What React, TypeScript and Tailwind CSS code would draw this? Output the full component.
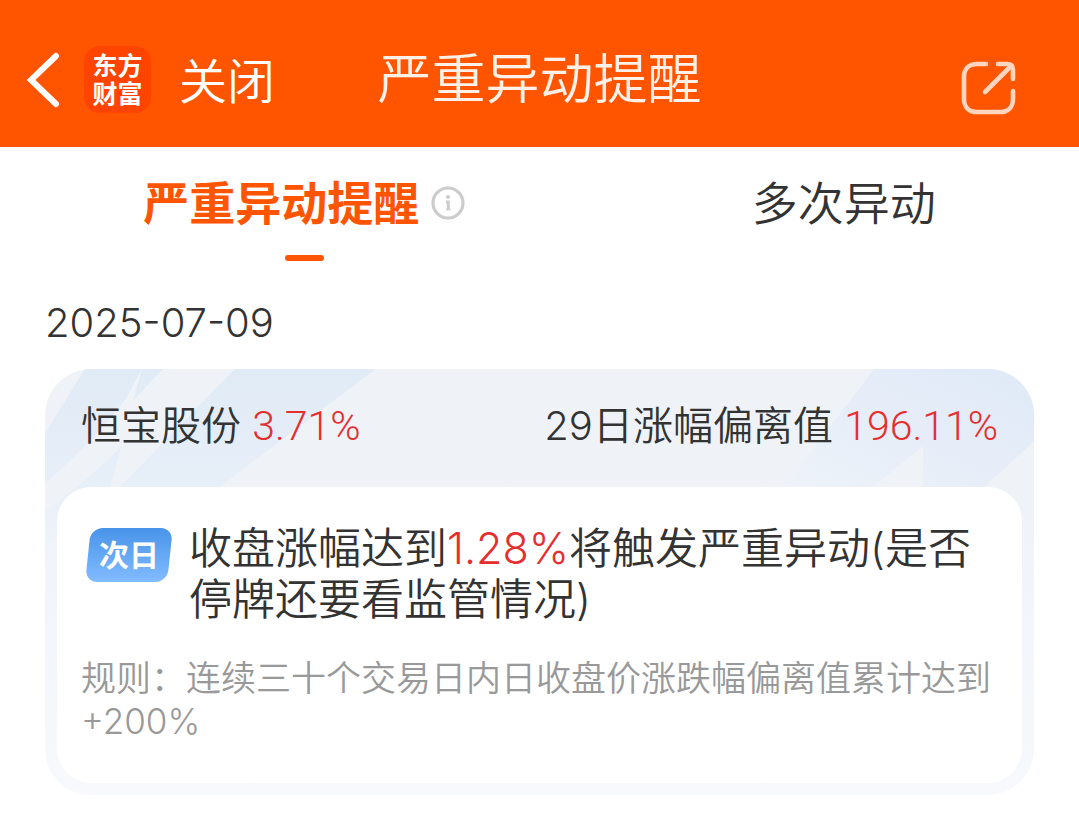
import { useState } from "react";

const tabs = [
  { key: "serious", label: "严重异动提醒", hasInfo: true },
  { key: "multiple", label: "多次异动", hasInfo: false },
];

const alerts = [
  {
    name: "恒宝股份",
    change: "3.71%",
    deviationLabel: "29日涨幅偏离值",
    deviation: "196.11%",
    badge: "次日",
    before: "收盘涨幅达到",
    trigger: "1.28%",
    after: "将触发严重异动(是否停牌还要看监管情况)",
    rule: "规则：连续三十个交易日内日收盘价涨跌幅偏离值累计达到+200%",
  },
];

function BackIcon() {
  return (
    <svg width="36" height="56" viewBox="0 0 36 56" fill="none" stroke="#fff" strokeWidth="6">
      <path d="M32 4 L7 28 L32 52" strokeLinecap="round" strokeLinejoin="miter" />
    </svg>
  );
}

function ShareIcon() {
  return (
    <svg
      width="56"
      height="56"
      viewBox="0 0 56 56"
      fill="none"
      stroke="#ffd5c0"
      strokeWidth="4.6"
      strokeLinecap="round"
      strokeLinejoin="round"
    >
      <path d="M25 4 H16 C8 4 3 9 3 17 V39 C3 47 8 52 16 52 H39 C47 52 52 47 52 39 V31" />
      <path d="M37 4 H46 C50 4 52 6 52 10 V19" />
      <path d="M24 32 L50 6" />
    </svg>
  );
}

function InfoIcon() {
  return (
    <svg width="34" height="34" viewBox="0 0 34 34" fill="none" stroke="#cccccc">
      <circle cx="17" cy="17" r="15" strokeWidth="3.2" />
      <circle cx="17" cy="11" r="2" fill="#cccccc" stroke="none" />
      <path d="M15 16 H17.3 V24" strokeWidth="3" />
      <path d="M15 23.5 H19.5" strokeWidth="1.6" />
    </svg>
  );
}

// Slanted light beams behind the card header
function CardBeams() {
  return (
    <svg
      className="absolute inset-x-0 top-0 w-full"
      height="180"
      viewBox="0 0 990 180"
      preserveAspectRatio="none"
      aria-hidden="true"
    >
      <defs>
        <linearGradient id="beam" gradientUnits="userSpaceOnUse" x1="0" y1="0" x2="0" y2="180">
          <stop offset="0" stopColor="#e1ebf5" />
          <stop offset="0.65" stopColor="#e7eff9" />
          <stop offset="1" stopColor="#eff4f9" />
        </linearGradient>
        <linearGradient id="beamRight" x1="0" y1="1" x2="1" y2="0">
          <stop offset="0" stopColor="#eef3f9" />
          <stop offset="0.5" stopColor="#e6edf8" />
          <stop offset="1" stopColor="#dfeaf7" />
        </linearGradient>
      </defs>
      <path d="M40 0 H97 L82 28 Q50 72 0 114 V64 Z" fill="url(#beam)" />
      <path d="M97 0 H118 L88 32 Z" fill="url(#beam)" />
      <path d="M76 78 L65 120 L0 180 V142 Q45 110 76 78 Z" fill="url(#beam)" />
      <path d="M190 0 H331 L175 118 V124 H70 L75 118 Z" fill="url(#beam)" />
      <path d="M830 0 H990 V72 L938 120 H879 V77 L826 120 H740 L765 85 Z" fill="url(#beamRight)" />
    </svg>
  );
}

export default function App() {
  const [activeTab, setActiveTab] = useState("serious");

  return (
    <div className="min-h-screen bg-white font-['Inter','Noto_Sans_CJK_SC',sans-serif] font-[350] text-[#333333]">
      {/* Header */}
      <header className="grid h-[147px] grid-cols-[1fr_auto_1fr] items-center bg-[#ff5500] pt-3 text-white">
        <div className="flex items-center gap-6 pl-6">
          <button aria-label="返回">
            <BackIcon />
          </button>
          <a
            href="#home"
            className="flex size-[67px] flex-col items-center justify-center rounded-2xl bg-[#ff4400] text-[25px] leading-[28px] font-bold"
          >
            <span>东方</span>
            <span>财富</span>
          </a>
          <button className="ml-1 pt-1 text-[48px] leading-none whitespace-nowrap">关闭</button>
        </div>
        <h1 className="text-[54px] leading-[64px] text-[#fff0e8]">严重异动提醒</h1>
        <button aria-label="分享" className="mt-4 mr-[62px] justify-self-end">
          <ShareIcon />
        </button>
      </header>

      {/* Tabs */}
      <nav className="flex justify-around pt-7">
        {tabs.map((tab) => {
          const isActive = tab.key === activeTab;
          return (
            <button
              key={tab.key}
              onClick={() => setActiveTab(tab.key)}
              className="flex flex-col items-center gap-6"
            >
              <span className="flex items-center gap-3 text-[46px] leading-[56px]">
                <span className={isActive ? "font-bold text-[#ff5500]" : ""}>{tab.label}</span>
                {tab.hasInfo && <InfoIcon />}
              </span>
              {isActive && <span className="h-[6px] w-[39px] rounded-full bg-[#ff5500]" />}
            </button>
          );
        })}
      </nav>

      <main className="px-[45px] pt-9">
        <time dateTime="2025-07-09" className="block text-[40px] leading-[52px]">
          2025-07-09
        </time>

        {alerts.map((item) => (
          <article
            key={item.name}
            className="relative mt-5 overflow-hidden rounded-[46px] bg-linear-to-b from-[#eff3f8] from-30% to-[#f7f9fc] px-3 pb-3"
          >
            <CardBeams />
            <div className="relative flex h-[118px] items-center justify-between px-6 pb-1 text-[40px] leading-[52px]">
              <p>
                {item.name} <span className="font-['Roboto',sans-serif] text-[41px] text-[#e62e2e]">{item.change}</span>
              </p>
              <p>
                {item.deviationLabel}{" "}
                <span className="font-['Roboto',sans-serif] text-[41px] text-[#e62e2e]">{item.deviation}</span>
              </p>
            </div>

            <div className="relative rounded-[34px] bg-white px-6 pt-9 pb-10">
              <div className="flex items-start gap-4 pl-1">
                <span className="relative mt-[5px] flex h-[54px] w-[88px] shrink-0 items-center justify-center text-[30px] font-bold text-white">
                  <span className="absolute inset-x-[3px] inset-y-0 -skew-x-6 rounded-xl bg-linear-to-b from-[#4794e9] to-[#82bbff]" />
                  <span className="relative">{item.badge}</span>
                </span>
                <p className="text-[43px] leading-[51px]">
                  {item.before}
                  <span className="text-[#e62e2e]">{item.trigger}</span>
                  {item.after}
                </p>
              </div>
              <p className="mt-8 text-[35px] leading-[43px] text-[#999999]">{item.rule}</p>
            </div>
          </article>
        ))}
      </main>
    </div>
  );
}
